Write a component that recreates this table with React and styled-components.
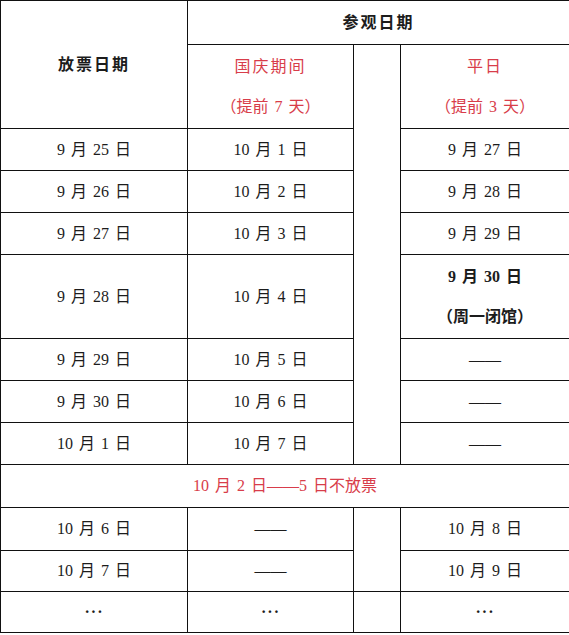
import React from "react";
import styled, { createGlobalStyle } from "styled-components";

const GlobalStyle = createGlobalStyle`
  html, body {
    margin: 0;
    padding: 0;
    background: #fff;
  }
  body {
    font-family: "Liberation Serif", "Noto Sans CJK SC", serif;
    color: #1c1c1c;
  }
`;

const Table = styled.table`
  width: 569px;
  border-collapse: collapse;
  table-layout: fixed;
  font-size: 16px;
`;

const Row = styled.tr`
  height: ${(p) => p.$h || 42}px;
`;

const Cell = styled.td`
  border: 1.5px solid #111;
  padding: 0;
  text-align: center;
  vertical-align: middle;
  line-height: ${(p) => (p.$lines ? "40px" : "20px")};
  font-weight: ${(p) => (p.$bold ? 700 : 400)};
  color: ${(p) => (p.$red ? "#d83d4a" : "#1c1c1c")};
  letter-spacing: ${(p) => (p.$spaced ? "2px" : "0")};
  word-spacing: 2px;
  white-space: nowrap;
`;

const Dots = styled.span`
  letter-spacing: 1px;
  font-weight: 700;
`;

const rowsTop = [
  ["9 月 25 日", "10 月 1 日", "9 月 27 日"],
  ["9 月 26 日", "10 月 2 日", "9 月 28 日"],
  ["9 月 27 日", "10 月 3 日", "9 月 29 日"],
];

const rowsMid = [
  ["9 月 29 日", "10 月 5 日", "——"],
  ["9 月 30 日", "10 月 6 日", "——"],
  ["10 月 1 日", "10 月 7 日", "——"],
];

export default function App() {
  return (
    <>
      <GlobalStyle />
      <Table>
        <colgroup>
          <col style={{ width: 187 }} />
          <col style={{ width: 166 }} />
          <col style={{ width: 47 }} />
          <col style={{ width: 169 }} />
        </colgroup>
        <tbody>
          <Row $h={44}>
            <Cell rowSpan={2} $bold $spaced>放票日期</Cell>
            <Cell colSpan={3} $bold $spaced>参观日期</Cell>
          </Row>
          <Row $h={84}>
            <Cell $red $lines>
              <span style={{ letterSpacing: 2 }}>国庆期间</span>
              <br />（提前 7 天）
            </Cell>
            <Cell rowSpan={8} />
            <Cell $red $lines>
              <span style={{ letterSpacing: 2 }}>平日</span>
              <br />（提前 3 天）
            </Cell>
          </Row>
          {rowsTop.map((r) => (
            <Row key={r[0]}>
              <Cell>{r[0]}</Cell>
              <Cell>{r[1]}</Cell>
              <Cell>{r[2]}</Cell>
            </Row>
          ))}
          <Row $h={84}>
            <Cell>9 月 28 日</Cell>
            <Cell>10 月 4 日</Cell>
            <Cell $bold $lines>
              9 月 30 日
              <br />（周一闭馆）
            </Cell>
          </Row>
          {rowsMid.map((r) => (
            <Row key={r[0]}>
              <Cell>{r[0]}</Cell>
              <Cell>{r[1]}</Cell>
              <Cell>{r[2]}</Cell>
            </Row>
          ))}
          <Row $h={43}>
            <Cell colSpan={4} $red>10 月 2 日——5 日不放票</Cell>
          </Row>
          <Row $h={43}>
            <Cell>10 月 6 日</Cell>
            <Cell>——</Cell>
            <Cell rowSpan={2} />
            <Cell>10 月 8 日</Cell>
          </Row>
          <Row $h={41}>
            <Cell>10 月 7 日</Cell>
            <Cell>——</Cell>
            <Cell>10 月 9 日</Cell>
          </Row>
          <Row $h={41}>
            <Cell><Dots>···</Dots></Cell>
            <Cell><Dots>···</Dots></Cell>
            <Cell />
            <Cell><Dots>···</Dots></Cell>
          </Row>
        </tbody>
      </Table>
    </>
  );
}
